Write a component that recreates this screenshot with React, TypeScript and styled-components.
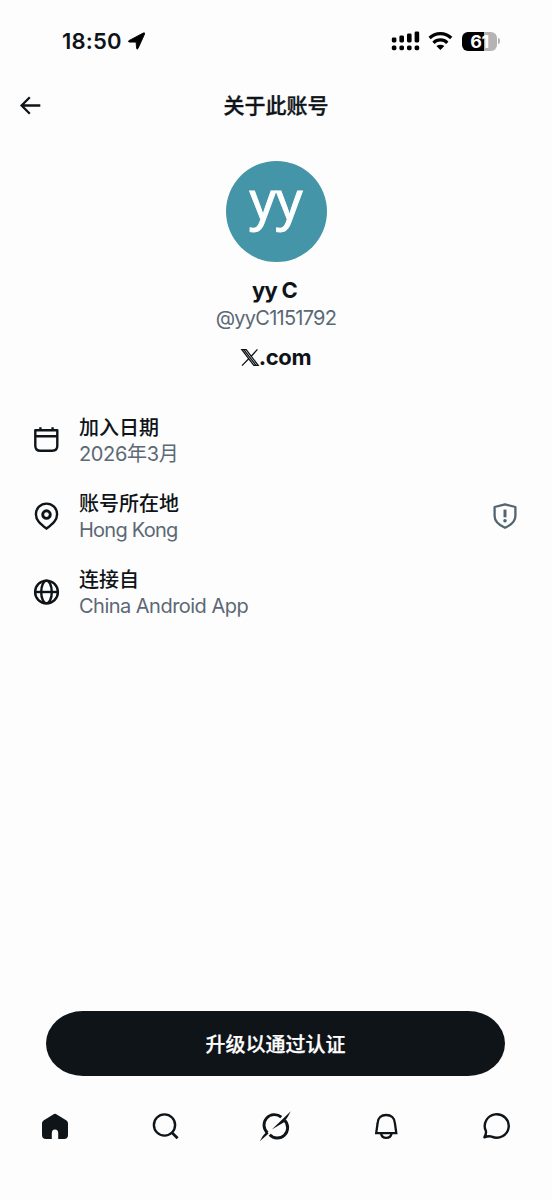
import React from 'react';
import styled, { createGlobalStyle } from 'styled-components';

const INK = '#0f1419';
const MUTED = '#5b6875';

const GlobalStyle = createGlobalStyle`
  * { box-sizing: border-box; }
  body {
    margin: 0;
    background: #fdfdfd;
    color: ${INK};
    font-family: Inter, "Noto Sans CJK SC", sans-serif;
  }
`;

const Screen = styled.main`
  width: 552px;
  height: 1200px;
  display: flex;
  flex-direction: column;
  overflow: hidden;
`;

const Text = styled.span<{ $spacing?: number }>`
  display: block;
  white-space: nowrap;
  letter-spacing: ${(p) => p.$spacing ?? 0}px;
`;

const Icon = styled.svg`
  display: block;
  flex: none;
  overflow: visible;
`;

const StatusBar = styled.header`
  height: 80px;
  padding: 2px 55px 0 62px;
  display: flex;
  align-items: center;
  justify-content: space-between;
`;

const StatusGroup = styled.div<{ $gap: number }>`
  display: flex;
  align-items: center;
  gap: ${(p) => p.$gap}px;
  height: 20px;
`;

const Clock = styled(Text)`
  width: 60px;
  font-size: 22px;
  font-weight: 600;
  line-height: 22px;
`;

const Battery = styled.div`
  position: relative;
  width: 35px;
  height: 19px;
  border-radius: 6px;
  background: linear-gradient(90deg, #000 22px, #b4b4b4 22px);
  color: #fff;
  font-size: 18px;
  font-weight: 700;
  line-height: 19px;
  text-align: center;
  letter-spacing: -0.5px;

  &::after {
    content: '';
    position: absolute;
    right: -3px;
    top: 6.5px;
    width: 2px;
    height: 6px;
    border-radius: 0 2px 2px 0;
    background: #b4b4b4;
  }
`;

const NavBar = styled.div`
  height: 52px;
  padding: 0 20px;
  display: grid;
  grid-template-columns: 22px 1fr 22px;
  align-items: center;
`;

const BackButton = styled.button`
  padding: 0 0 1px;
  border: 0;
  background: none;
  color: inherit;
`;

const Title = styled.h1`
  margin: 0;
  font-size: 21px;
  font-weight: 500;
  line-height: 30px;
  text-align: center;
  -webkit-text-stroke: 0.35px currentColor;
`;

const Profile = styled.section`
  display: flex;
  flex-direction: column;
  align-items: center;
  padding-top: 29px;
`;

const Avatar = styled.div`
  width: 101px;
  height: 101px;
  border-radius: 50%;
  background: #4495a7;
  color: #fff;
  display: flex;
  justify-content: center;
  font-family: "Noto Sans", sans-serif;
  font-size: 52px;
  line-height: 76px;
  -webkit-text-stroke: 0.9px currentColor;
`;

const Name = styled(Text)`
  margin-top: 15px;
  padding-right: 3px;
  font-size: 22px;
  font-weight: 700;
  line-height: 27px;
`;

const Handle = styled(Text)`
  margin-top: 1px;
  color: ${MUTED};
  font-size: 20px;
  line-height: 27px;
`;

const Brand = styled.div`
  display: flex;
  align-items: center;
  margin-top: 12px;
  height: 27px;
  font-size: 22px;
  font-weight: 700;
  line-height: 27px;
`;

const Details = styled.section`
  padding: 42px 35px 0 34px;
  display: flex;
  flex-direction: column;
  gap: 22.7px;
`;

const DetailRow = styled.div`
  height: 53.5px;
  display: flex;
  align-items: center;
`;

const DetailText = styled.div`
  flex: 1;
  margin-left: 20px;
  padding-top: 2px;
`;

const Label = styled(Text)`
  font-size: 20px;
  font-weight: 500;
  line-height: 27px;
`;

const Value = styled(Text)`
  color: ${MUTED};
  font-size: 20px;
  line-height: 25.5px;
`;

const Upgrade = styled.button`
  margin: auto 47px 0 46px;
  height: 65px;
  border: 0;
  border-radius: 37px / 32.5px;
  background: ${INK};
  color: #fff;
  font-family: inherit;
  font-size: 20px;
  font-weight: 500;
  -webkit-text-stroke: 0.25px currentColor;
`;

const TabBar = styled.nav`
  height: 124px;
  padding: 34px 38px 0;
  display: flex;
  justify-content: space-between;
  align-items: flex-start;
`;

const rows = [
  { kind: 'calendar', label: '加入日期', value: '2026年3月', spacing: -0.35 },
  { kind: 'pin', label: '账号所在地', value: 'Hong Kong', spacing: -0.75, shield: true },
  { kind: 'globe', label: '连接自', value: 'China Android App', spacing: -0.52 },
];

const DetailIcon = ({ kind }: { kind: string }) => (
  <Icon width="25" height="26" viewBox="0 0 25 26" fill="none" stroke={INK} strokeWidth="2.4">
    {kind === 'calendar' && (
      <>
        <path d="M1.3 3.3h22v15.5q0 5-5 5H6.300q-5 0-5-5Z" strokeLinejoin="round" />
        <path d="M1.300 9.300h22M6.400 3.500V.2M18.600 3.500V.2" />
      </>
    )}
    {kind === 'pin' && (
      <>
        <path d="M12.5 25.500C6 20.500 1.900 17 1.900 11.200a10.600 10.600 0 0 1 21.200 0c0 5.800-4.100 9.300-10.600 14.300Z" />
        <circle cx="12.500" cy="11.600" r="3.800" strokeWidth="2.900" />
      </>
    )}
    {kind === 'globe' && (
      <>
        <circle cx="12.500" cy="13" r="11.400" />
        <ellipse cx="12.500" cy="13" rx="5.300" ry="11.400" />
        <path d="M1 13h23" />
      </>
    )}
  </Icon>
);

export default function App() {
  return (
    <Screen>
      <GlobalStyle />
      <StatusBar>
        <StatusGroup $gap={6}>
          <Clock $spacing={0.2}>18:50</Clock>
          <Icon width="18" height="18" viewBox="0 0 18 18" fill="#000" stroke="#000" strokeWidth="0.9" strokeLinejoin="round">
            <path d="M.8 8.700 15.300 1Q17.100.3 16.500 2.200L10 16.500Q9.100 18 8.600 16.200L8.100 10.100 1.400 10.100Q-.4 9.600.8 8.700Z" />
          </Icon>
        </StatusGroup>
        <StatusGroup $gap={9}>
          <Icon width="28" height="20" viewBox="0.7 0 28 20" fill="#000">
            {[0, 1, 2, 3].map((i) => (
              <React.Fragment key={i}>
                <rect x={0.5 + i * 7.6} y={6.5 - i * 2} width="4.6" height={5 + i * 2} rx="1.4" />
                <rect x={0.5 + i * 7.6} y="14.4" width="4.6" height="4.8" rx="1.6" />
              </React.Fragment>
            ))}
          </Icon>
          <Icon width="24" height="18" viewBox="0.6 0 24 18" fill="none" stroke="#000" strokeWidth="3.2">
            <path d="M1.2 6a15.400 15.400 0 0 1 21.600 0M5.100 10.800a9.800 9.800 0 0 1 13.800 0" />
            <path d="M12 18 8 14.100Q12 11.200 16 14.100Z" fill="#000" stroke="none" />
          </Icon>
          <Battery>61</Battery>
        </StatusGroup>
      </StatusBar>

      <NavBar>
        <BackButton aria-label="返回">
          <Icon width="21" height="19" viewBox="0 0 21 19" fill="none" stroke={INK} strokeWidth="2.3">
            <path d="M20.300 9.500H2M9.800 1.200 1.600 9.500l8.200 8.300" />
          </Icon>
        </BackButton>
        <Title>关于此账号</Title>
      </NavBar>

      <Profile>
        <Avatar>yy</Avatar>
        <Name $spacing={-0.7}>yy C</Name>
        <Handle $spacing={-0.75}>@yyC1151792</Handle>
        <Brand>
          <Icon width="18" height="17" viewBox="0 0 18 17" fill="none" stroke={INK} strokeWidth="1.3">
            <path d="M.8.6h4.400l12 15.800h-4.400ZM3 .8l12 15.600M16.400.4 9.800 7.800M8.200 9.200 1 16.600" />
          </Icon>
          <Text $spacing={-0.4}>.com</Text>
        </Brand>
      </Profile>

      <Details>
        {rows.map((row) => (
          <DetailRow key={row.kind}>
            <DetailIcon kind={row.kind} />
            <DetailText>
              <Label>{row.label}</Label>
              <Value $spacing={row.spacing}>{row.value}</Value>
            </DetailText>
            {row.shield && (
              <Icon width="24" height="26" viewBox="0 0 24 26" fill="none" stroke="#536471" strokeWidth="2.300">
                <path d="M12 1.300 22.400 4v9c0 6-4.900 9.300-10.400 11.800C6.500 22.300 1.600 19 1.600 13V4Z" strokeLinejoin="round" />
                <path d="M12 6.600v7.700" strokeWidth="3" />
                <circle cx="12" cy="17.800" r="1.800" fill="#536471" stroke="none" />
              </Icon>
            )}
          </DetailRow>
        ))}
      </Details>

      <Upgrade>升级以通过认证</Upgrade>

      <TabBar>
        <Icon width="34" height="34" viewBox="38 1110 34 34" fill={INK}>
          <path d="M53.200 1114.400Q55 1113.200 56.800 1114.400L66.500 1120.400Q68 1121.400 68 1123.400V1135Q68 1139 64 1139H58.200V1133.200Q58.200 1129.600 55 1129.600T51.800 1133.200V1139H46Q42 1139 42 1135V1123.400Q42 1121.400 43.500 1120.400Z" />
        </Icon>
        <Icon width="34" height="34" viewBox="148.500 1110 34 34" fill="none" stroke={INK} strokeWidth="2.400">
          <circle cx="164" cy="1125" r="10.600" />
          <path d="m171.300 1132.500 5.800 5.800" strokeWidth="2.700" />
        </Icon>
        <Icon width="34" height="34" viewBox="259 1110 34 34" fill={INK}>
          <path d="M267.500 1132.800A10.300 10.300 0 0 1 281.300 1117.200" fill="none" stroke={INK} strokeWidth="2.900" />
          <path d="M284.800 1120.500A10.300 10.300 0 0 1 269.700 1134.800" fill="none" stroke={INK} strokeWidth="2.900" />
          <path d="M290.800 1111.200 271.800 1129.400 284 1122.300Q287.800 1117.500 290.800 1111.200ZM259.800 1141.200Q262.500 1135.500 266.500 1131.800L268.600 1133.400Z" />
        </Icon>
        <Icon width="34" height="34" viewBox="370 1110 34 34" fill="none" stroke={INK} strokeWidth="2.300">
          <path d="M376.200 1133.200 377.600 1123.200C377.700 1118 381.300 1115 386.200 1115S394.700 1118 394.900 1123.200L396.300 1133.200Z" />
          <path d="M381.100 1133.500C381.800 1139.400 390.700 1139.400 391.500 1133.500" />
        </Icon>
        <Icon width="34" height="34" viewBox="480 1110 34 34" fill="none" stroke={INK} strokeWidth="2.400">
          <path d="M484.400 1137.300Q486.400 1134.500 485.900 1131A12 11.700 0 1 1 491.700 1136.600Q488.500 1135.700 484.400 1137.300Z" strokeLinejoin="round" />
        </Icon>
      </TabBar>
    </Screen>
  );
}
